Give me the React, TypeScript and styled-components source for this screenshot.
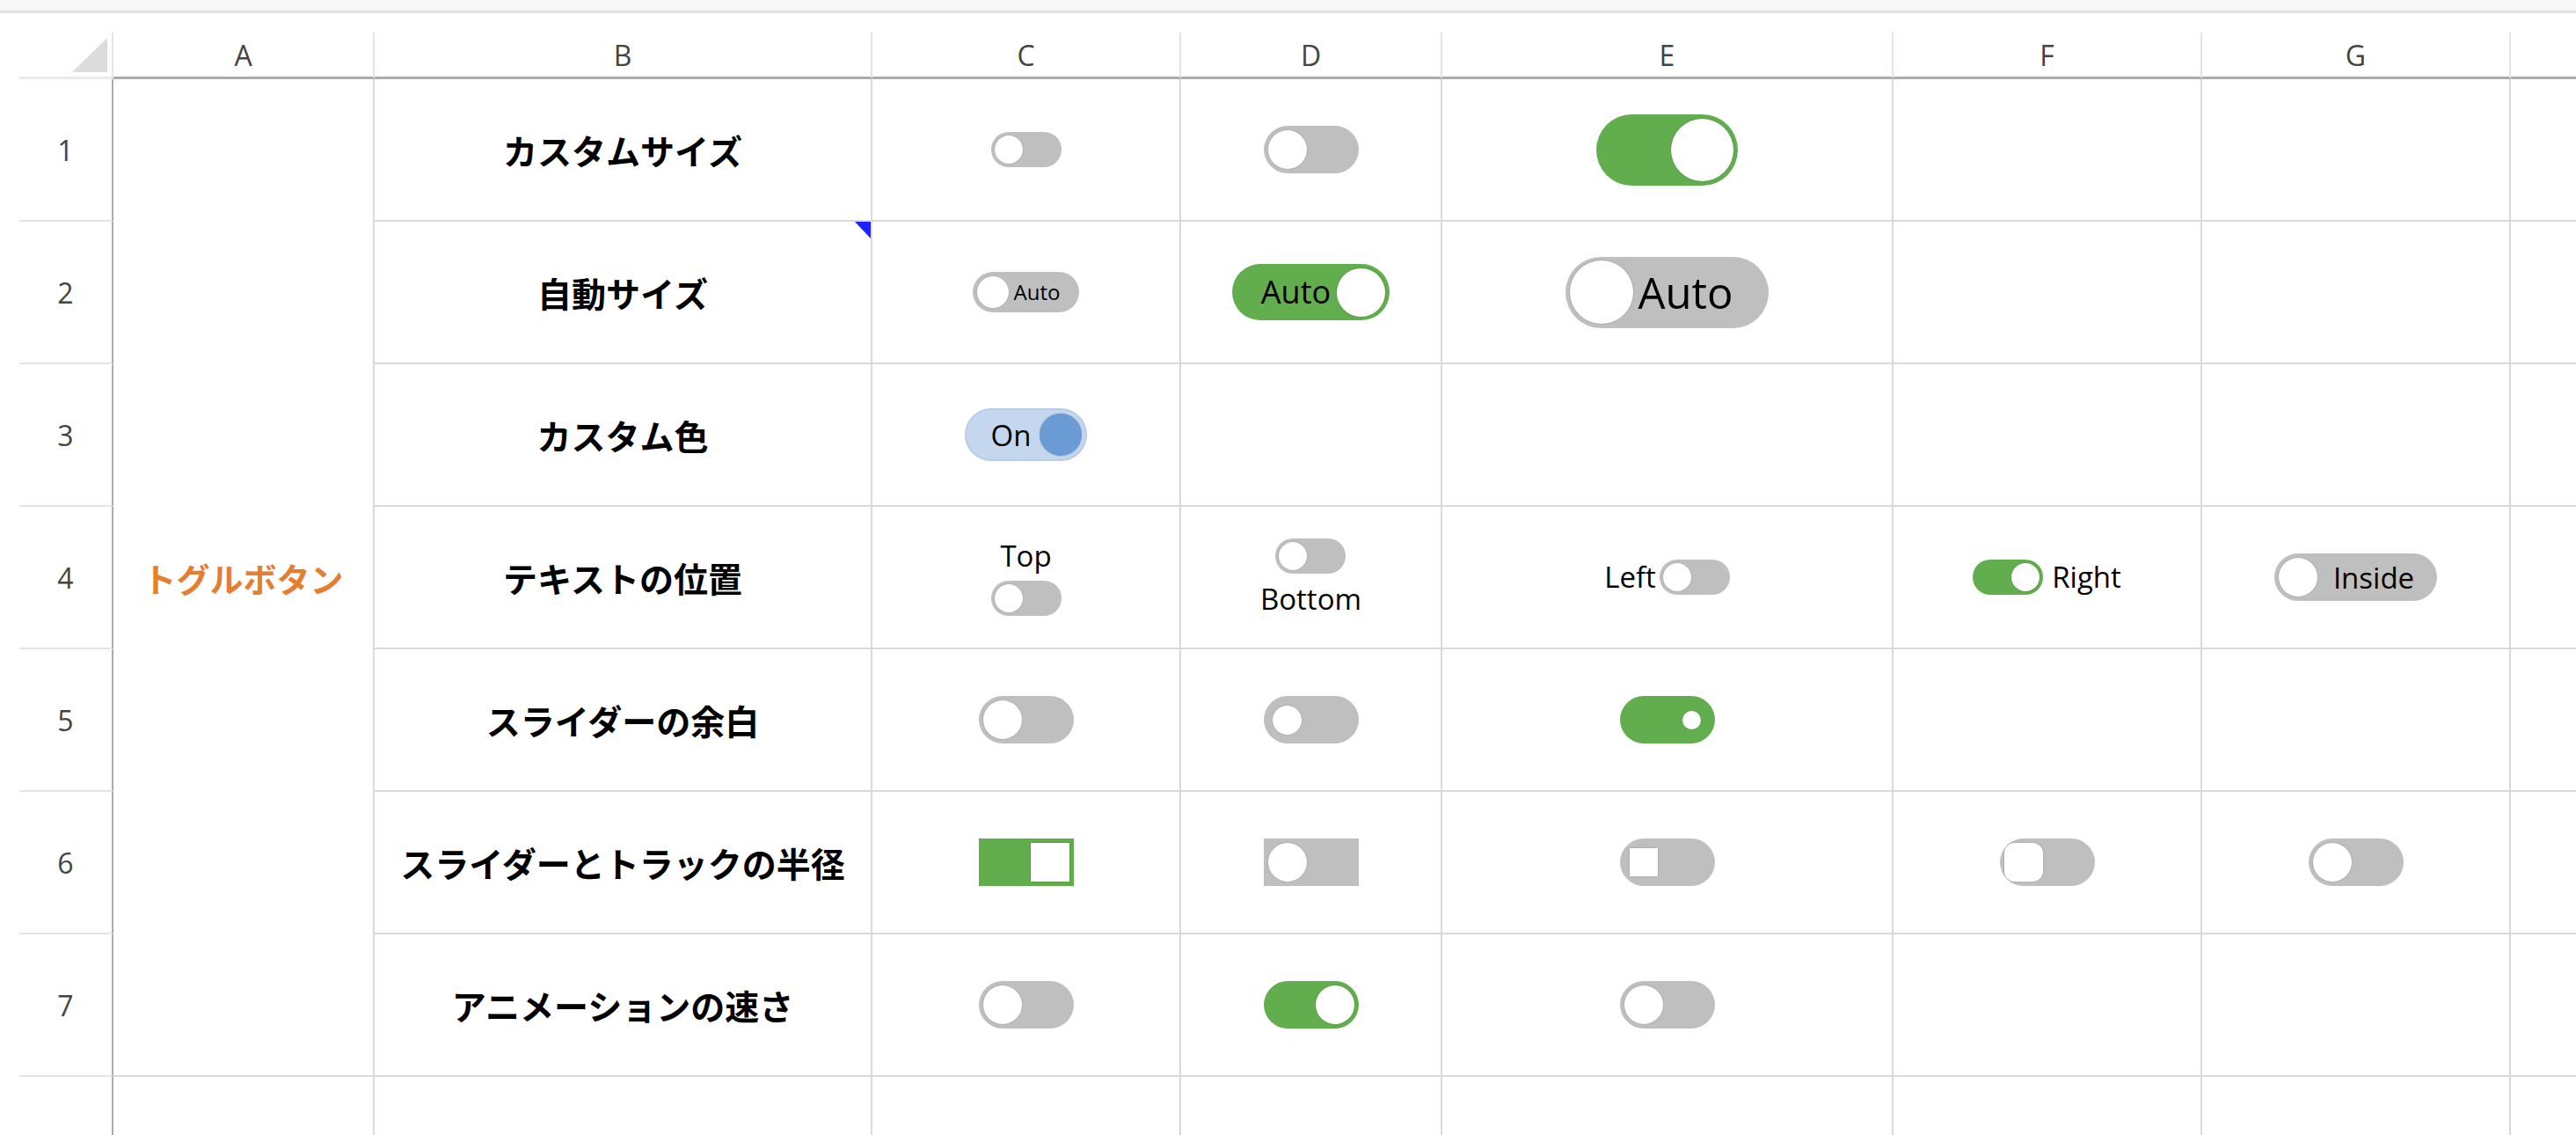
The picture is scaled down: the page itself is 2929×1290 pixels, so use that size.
import React from 'react';
import styled, { createGlobalStyle } from 'styled-components';

const SANS = `'Open Sans', 'Noto Sans', sans-serif`;
const JP = `'Noto Sans CJK JP', 'Noto Sans', sans-serif`;

const GRAY = '#bfbfbf';
const GREEN = '#62ad4d';

const GlobalStyle = createGlobalStyle`
  html, body {
    margin: 0;
    padding: 0;
    background: #ffffff;
    overflow: hidden;
  }

  #root {
    height: 100vh;
  }
`;

const Page = styled.div`
  height: 100vh;
  display: flex;
  flex-direction: column;
  font-family: ${SANS};
`;

const TopStrip = styled.div`
  flex: none;
  height: 12px;
  margin-bottom: 22px;
  background: #f8f7f8;
  border-bottom: 3px solid #e4e2e4;
`;

const Sheet = styled.div`
  flex: 1;
  display: grid;
  padding-left: 22px;
  grid-template-columns: 107px 297px 566px 351px 297px 513px 351px 351px 1fr;
  grid-template-rows: 53px repeat(7, 162px) 1fr;
`;

const Corner = styled.div`
  box-sizing: border-box;
  display: flex;
  align-items: flex-end;
  justify-content: flex-end;
  padding: 0 5px 5px 0;
  border-right: 2px solid #e1e6e1;
  border-bottom: 3px solid #e8ebe8;
`;

const CornerMark = styled.div`
  width: 40px;
  height: 39px;
  background: #dcdcdc;
  clip-path: polygon(100% 0, 100% 100%, 0 100%);
`;

const ColHeader = styled.div<{ $last?: boolean }>`
  box-sizing: border-box;
  display: flex;
  align-items: center;
  justify-content: center;
  font-size: 32px;
  color: #444444;
  border-right: ${(p) => (p.$last ? 'none' : '2px solid #e1e6e1')};
  border-bottom: 3px solid #ababab;
`;

const RowHeader = styled.div<{ $open?: boolean }>`
  box-sizing: border-box;
  display: flex;
  align-items: center;
  justify-content: center;
  font-size: 32px;
  color: #444444;
  border-right: 2px solid #ababab;
  border-bottom: ${(p) => (p.$open ? 'none' : '2px solid #e1e6e1')};
`;

const Cell = styled.div<{ $last?: boolean; $open?: boolean }>`
  position: relative;
  box-sizing: border-box;
  display: flex;
  align-items: center;
  justify-content: center;
  min-width: 0;
  border-right: ${(p) => (p.$last ? 'none' : '2px solid #d9d9d9')};
  border-bottom: ${(p) => (p.$open ? 'none' : '2px solid #d9d9d9')};
`;

const GroupCell = styled(Cell)`
  grid-row: span 7;
  font-family: ${JP};
  font-size: 38px;
  font-weight: 700;
  color: #e67e30;
`;

const RowLabel = styled.span`
  font-family: ${JP};
  font-size: 39px;
  font-weight: 700;
  color: #000000;
  white-space: nowrap;
`;

const CommentMark = styled.div`
  position: absolute;
  top: 0;
  right: 0;
  width: 18px;
  height: 19px;
  background: #1f1fff;
  clip-path: polygon(0 0, 100% 0, 100% 100%);
`;

/* toggle */

type ToggleProps = {
  on?: boolean;
  w?: number;
  h: number;
  thumb: number;
  pad: number;
  track?: string;
  knob?: string;
  edge?: string;
  trackRadius?: number;
  thumbRadius?: number;
  label?: string;
  labelSize?: number;
  gap?: number;
  textPad?: number;
};

const Track = styled.div<{
  $on: boolean;
  $w?: number;
  $h: number;
  $pad: number;
  $textPad: number;
  $gap: number;
  $color: string;
  $edge?: string;
  $radius?: number;
}>`
  box-sizing: border-box;
  flex: none;
  display: flex;
  flex-direction: ${(p) => (p.$on ? 'row-reverse' : 'row')};
  align-items: center;
  gap: ${(p) => p.$gap}px;
  width: ${(p) => (p.$w ? `${p.$w}px` : 'auto')};
  height: ${(p) => p.$h}px;
  padding-left: ${(p) => (p.$on ? p.$textPad : p.$pad)}px;
  padding-right: ${(p) => (p.$on ? p.$pad : p.$textPad)}px;
  border-radius: ${(p) => (p.$radius ?? p.$h / 2)}px;
  background: ${(p) => p.$color};
  border: ${(p) => (p.$edge ? `2px solid ${p.$edge}` : 'none')};
`;

const Knob = styled.div<{ $size: number; $radius?: number; $color: string }>`
  flex: none;
  width: ${(p) => p.$size}px;
  height: ${(p) => p.$size}px;
  border-radius: ${(p) => (p.$radius ?? p.$size / 2)}px;
  background: ${(p) => p.$color};
  box-shadow: 0 0 2px rgba(0, 0, 0, 0.22);
`;

const InnerText = styled.span<{ $size: number }>`
  font-size: ${(p) => p.$size}px;
  line-height: 1;
  color: #000000;
  white-space: nowrap;
`;

const Toggle: React.FC<ToggleProps> = ({
  on = false,
  w,
  h,
  thumb,
  pad,
  track,
  knob = '#ffffff',
  edge,
  trackRadius,
  thumbRadius,
  label,
  labelSize = 32,
  gap = 6,
  textPad,
}) => (
  <Track
    $on={on}
    $w={w}
    $h={h}
    $pad={pad}
    $textPad={textPad ?? pad}
    $gap={label ? gap : 0}
    $color={track ?? (on ? GREEN : GRAY)}
    $edge={edge}
    $radius={trackRadius}
  >
    <Knob $size={thumb} $radius={thumbRadius} $color={knob} />
    {label && <InnerText $size={labelSize}>{label}</InnerText>}
  </Track>
);

type Side = 'top' | 'bottom' | 'left' | 'right';

const directions: Record<Side, string> = {
  top: 'column',
  bottom: 'column-reverse',
  left: 'row',
  right: 'row-reverse',
};

const Labeled = styled.div<{ $side: Side; $gap: number }>`
  display: flex;
  flex-direction: ${(p) => directions[p.$side]};
  align-items: center;
  gap: ${(p) => p.$gap}px;
`;

const OuterText = styled.span`
  font-size: 33px;
  line-height: 1.2;
  color: #000000;
  white-space: nowrap;
`;

const small = { w: 80, h: 40, thumb: 32, pad: 4 };
const normal = { w: 108, h: 54, thumb: 44, pad: 5 };

const WithText: React.FC<{ side: Side; gap: number; text: string; on?: boolean }> = ({
  side,
  gap,
  text,
  on,
}) => (
  <Labeled $side={side} $gap={gap}>
    <OuterText>{text}</OuterText>
    <Toggle {...small} on={on} />
  </Labeled>
);

type SheetRow = {
  label: string;
  cells: React.ReactNode[];
};

const rows: SheetRow[] = [
  {
    label: 'カスタムサイズ',
    cells: [
      <Toggle {...small} />,
      <Toggle {...normal} />,
      <Toggle on w={161} h={81} thumb={71} pad={5} />,
    ],
  },
  {
    label: '自動サイズ',
    cells: [
      <Toggle h={46} thumb={36} pad={5} label='Auto' labelSize={24} gap={6} textPad={22} />,
      <Toggle on h={64} thumb={55} pad={5} label='Auto' labelSize={36} gap={7} textPad={33} />,
      <Toggle h={81} thumb={72} pad={5} label='Auto' labelSize={49} gap={6} textPad={41} />,
    ],
  },
  {
    label: 'カスタム色',
    cells: [
      <Toggle
        on
        h={60}
        thumb={48}
        pad={4}
        track='#c4d7ef'
        knob='#6a9bd5'
        edge='#b9cde8'
        label='On'
        labelSize={33}
        gap={10}
        textPad={28}
      />,
    ],
  },
  {
    label: 'テキストの位置',
    cells: [
      <WithText side='top' gap={9} text='Top' />,
      <WithText side='bottom' gap={9} text='Bottom' />,
      <WithText side='left' gap={4} text='Left' />,
      <WithText side='right' gap={10} text='Right' on />,
      <Toggle h={54} thumb={44} pad={5} label='Inside' labelSize={33} gap={18} textPad={26} />,
    ],
  },
  {
    label: 'スライダーの余白',
    cells: [
      <Toggle {...normal} />,
      <Toggle {...normal} thumb={33} pad={10} />,
      <Toggle {...normal} on thumb={21} pad={16} />,
    ],
  },
  {
    label: 'スライダーとトラックの半径',
    cells: [
      <Toggle {...normal} on trackRadius={0} thumbRadius={0} />,
      <Toggle {...normal} trackRadius={0} />,
      <Toggle {...normal} thumb={32} pad={11} thumbRadius={0} />,
      <Toggle {...normal} thumbRadius={12} />,
      <Toggle {...normal} />,
    ],
  },
  {
    label: 'アニメーションの速さ',
    cells: [<Toggle {...normal} />, <Toggle {...normal} on />, <Toggle {...normal} />],
  },
];

const columns = ['A', 'B', 'C', 'D', 'E', 'F', 'G', ''];
const DATA_COLUMNS = 6; // C..H

export default function App() {
  return (
    <Page>
      <GlobalStyle />
      <TopStrip />
      <Sheet>
        <Corner>
          <CornerMark />
        </Corner>
        {columns.map((c, i) => (
          <ColHeader key={`h${i}`} $last={i === columns.length - 1}>
            {c}
          </ColHeader>
        ))}

        {rows.map((row, r) => (
          <React.Fragment key={r}>
            <RowHeader>{r + 1}</RowHeader>
            {r === 0 && <GroupCell>トグルボタン</GroupCell>}
            <Cell>
              <RowLabel>{row.label}</RowLabel>
              {r === 1 && <CommentMark />}
            </Cell>
            {Array.from({ length: DATA_COLUMNS }).map((_, i) => (
              <Cell key={i} $last={i === DATA_COLUMNS - 1}>
                {row.cells[i]}
              </Cell>
            ))}
          </React.Fragment>
        ))}

        <RowHeader $open />
        {columns.map((_, i) => (
          <Cell key={`e${i}`} $open $last={i === columns.length - 1} />
        ))}
      </Sheet>
    </Page>
  );
}
